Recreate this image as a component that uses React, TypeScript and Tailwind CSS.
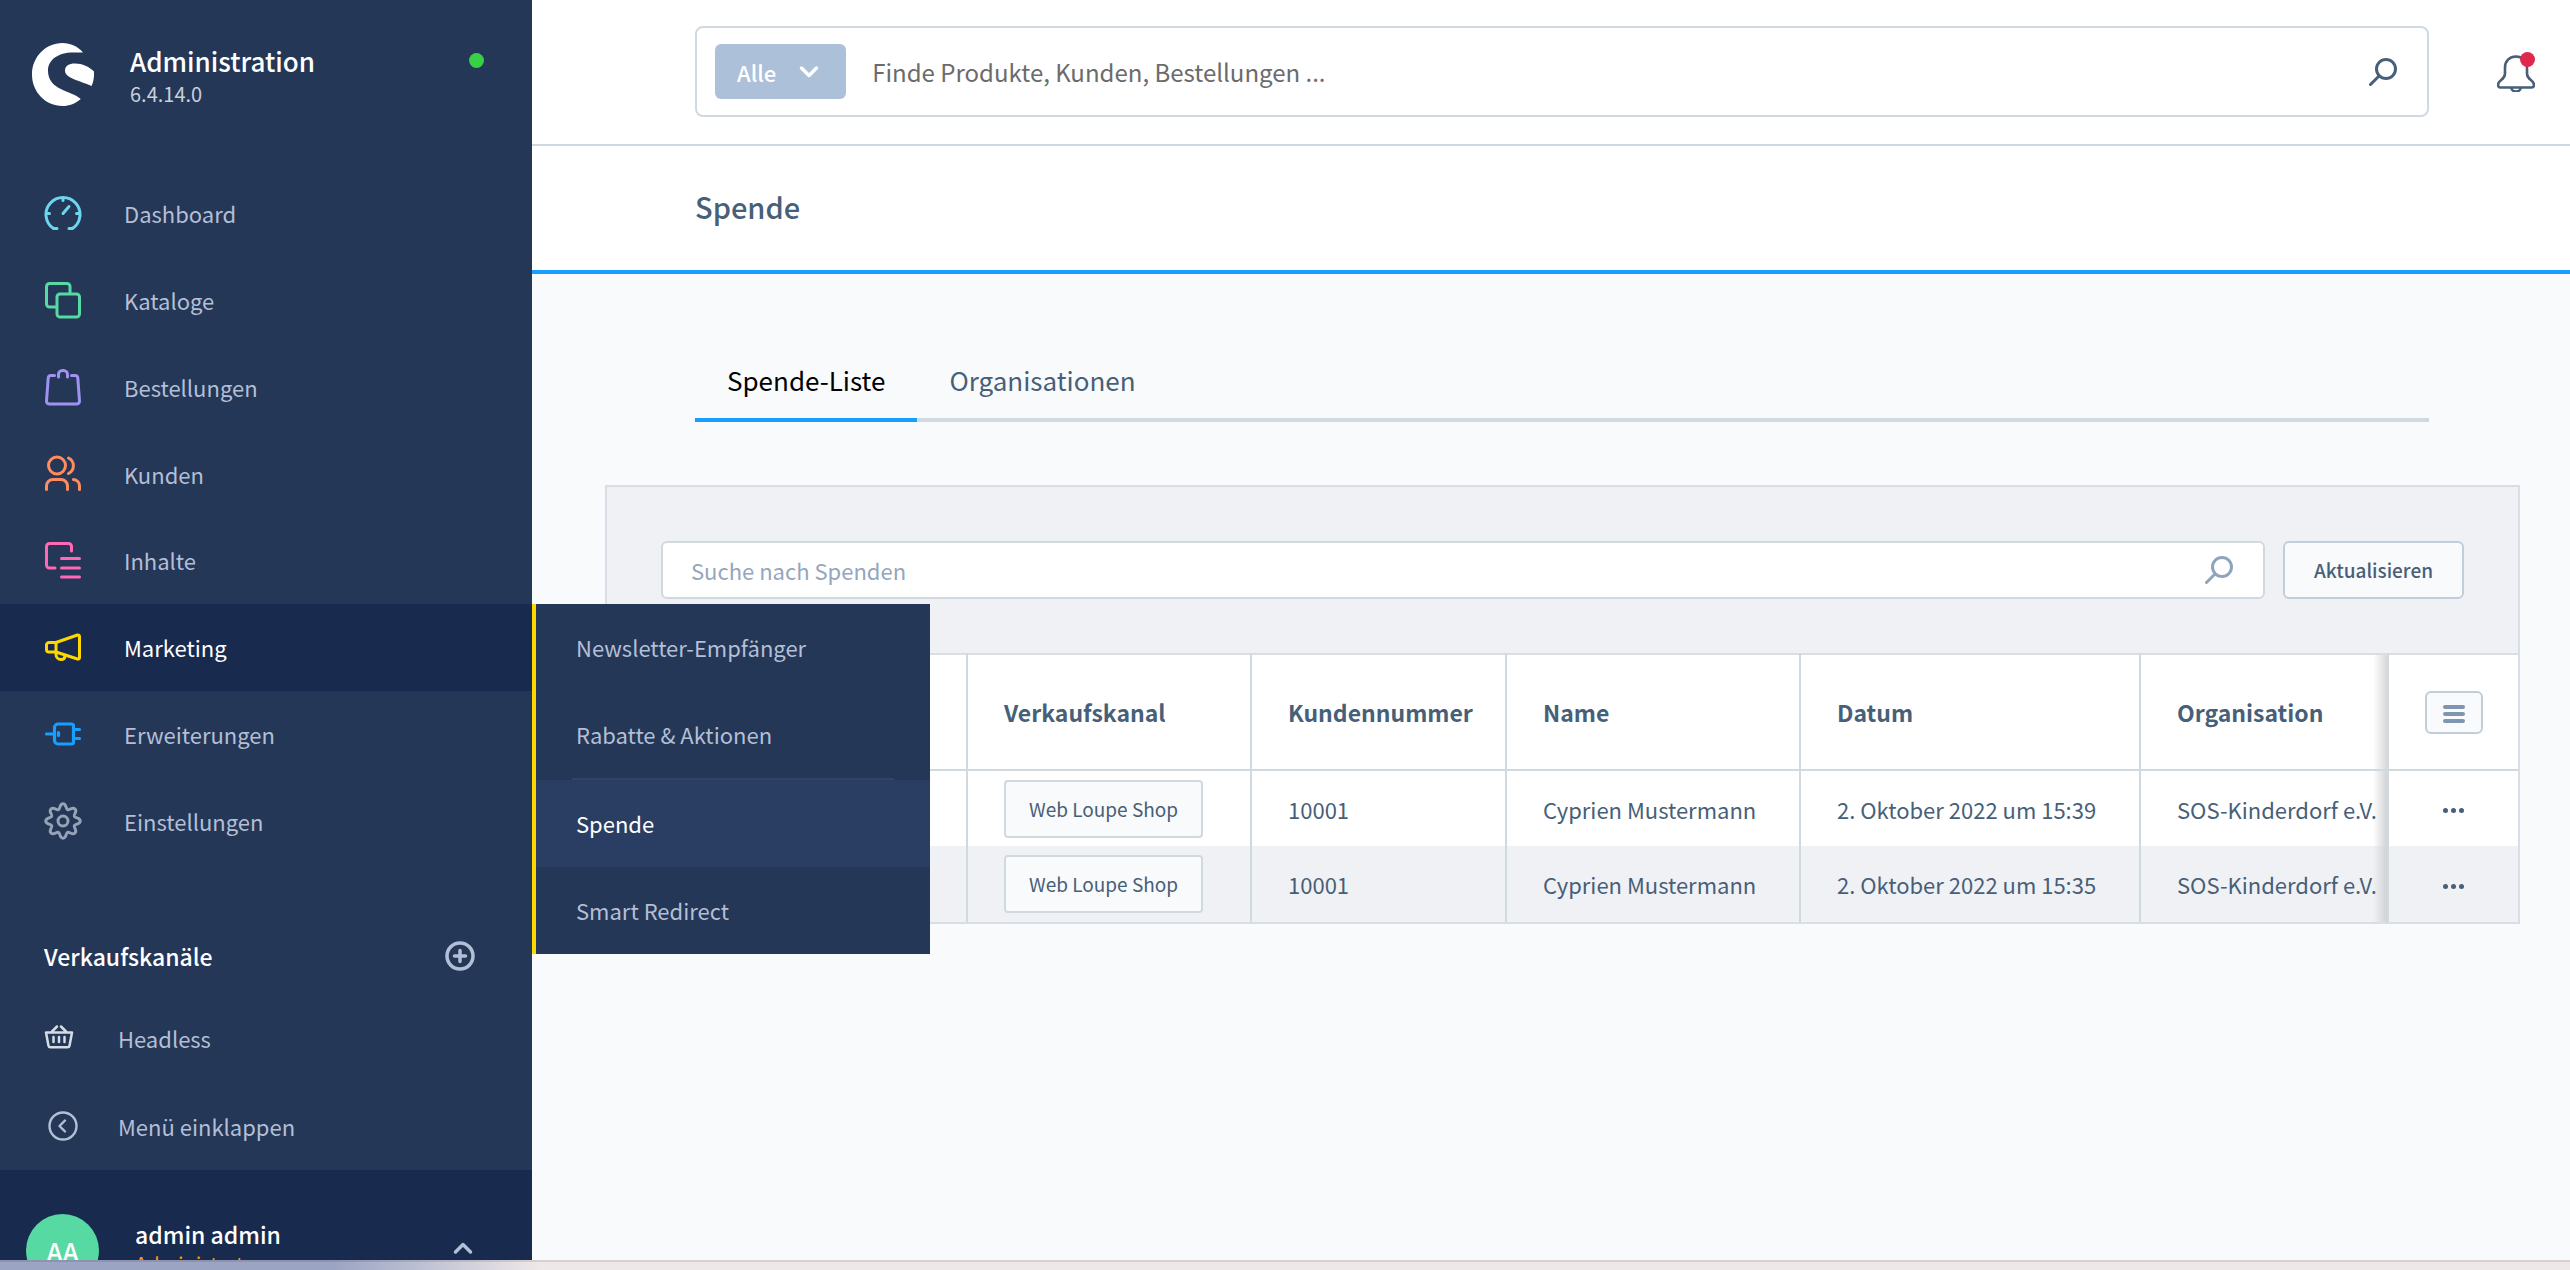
import React from "react";

type IconProps = { className?: string };

const Svg = ({ size, className = "", w = 3, children }: { size: number; className?: string; w?: number; children: React.ReactNode }) => (
  <svg
    width={size}
    height={size}
    viewBox={`0 0 ${size} ${size}`}
    fill="none"
    stroke="currentColor"
    strokeWidth={w}
    strokeLinecap="round"
    strokeLinejoin="round"
    aria-hidden="true"
    className={`shrink-0 ${className}`}
  >
    {children}
  </svg>
);

const DashboardIcon = () => (
  <Svg size={38} className="text-[#6ed5f0]">
    <path d="M13 34.500H9.500A17 17 0 1 1 28.500 34.500H25" />
    <path d="M19 4v2.500M3 19.500h2.500M32.500 19.500H35M19 19.500l6-7" />
  </Svg>
);

const CatalogIcon = () => (
  <Svg size={38} className="text-[#57d9a3]">
    <path d="M12 26H5.500a3 3 0 0 1-3-3V5.500a3 3 0 0 1 3-3H23a3 3 0 0 1 3 3V12" />
    <rect x="13" y="13" width="22.500" height="23" rx="3" />
  </Svg>
);

const OrdersIcon = () => (
  <Svg size={38} className="text-[#a092f0]">
    <path d="M10.500 7.500H7a2.800 2.800 0 0 0-2.800 2.600L2.500 33a2.800 2.800 0 0 0 2.800 3h27.400a2.800 2.800 0 0 0 2.800-3L33.800 10.100A2.800 2.800 0 0 0 31 7.500h-3.500" />
    <path d="M14.500 9V6.500a4 4 0 0 1 4-4h1a4 4 0 0 1 4 4V9" />
  </Svg>
);

const CustomersIcon = () => (
  <Svg size={38} className="text-[#ff8b60]">
    <circle cx="13" cy="10.500" r="8.500" />
    <path d="M24.500 3a8.600 8.600 0 0 1 0 15.500" />
    <path d="M2.500 34.500V31a6.500 6.500 0 0 1 6.500-6.500h8a6.500 6.500 0 0 1 6.500 6.500v3.500" />
    <path d="M29.500 24.500a6.500 6.500 0 0 1 6 6.500v3.500" />
  </Svg>
);

const ContentIcon = () => (
  <Svg size={38} className="text-[#ff68b4]">
    <path d="M11 27H5.500a3 3 0 0 1-3-3V5.500a3 3 0 0 1 3-3h19a3 3 0 0 1 3 3V10" />
    <path d="M17.500 17.500h18M17.500 27h18M17.500 36h18" />
  </Svg>
);

const MarketingIcon = () => (
  <Svg size={38} className="text-[#ffd700]">
    <path d="M12 14.500L33.500 7a1.500 1.500 0 0 1 2 1.500v21a1.500 1.500 0 0 1-2 1.500L12 24H4.500a2.500 2.500 0 0 1-2-2.500V17a2.500 2.500 0 0 1 2.500-2.500z" />
    <path d="M12 14.500V26.500a5 5 0 0 0 5 5c2.500 0 4-1.500 4-4" />
  </Svg>
);

const ExtensionsIcon = () => (
  <Svg size={38} w={3.200} className="text-[#189eff]">
    <path d="M14 9h13.500a2 2 0 0 1 2 2v16a2 2 0 0 1-2 2H14a3.500 3.500 0 0 1-3.500-3.500v-13A3.500 3.500 0 0 1 14 9z" />
    <path d="M2.500 19h8M14.500 17.500v3M29.500 14.500h6M29.500 23.500h6" />
  </Svg>
);

const SettingsIcon = () => (
  <Svg size={38} className="text-[#94a3b5]">
    <circle cx="19" cy="19" r="5" />
    <path d="M19.000 1.800 C22.500 1.800 21.600 6.600 23.600 7.700 C25.600 8.600 28.300 4.300 31.000 7.000 C33.700 9.700 29.400 12.400 30.300 14.400 C31.400 16.400 36.200 15.500 36.200 19.000 C36.200 22.500 31.400 21.600 30.300 23.600 C29.400 25.600 33.700 28.300 31.000 31.000 C28.300 33.700 25.600 29.400 23.600 30.300 C21.600 31.400 22.500 36.200 19.000 36.200 C15.500 36.200 16.400 31.400 14.400 30.300 C12.400 29.400 9.700 33.700 7.000 31.000 C4.300 28.300 8.600 25.600 7.700 23.600 C6.600 21.600 1.800 22.500 1.800 19.000 C1.800 15.500 6.600 16.400 7.700 14.400 C8.600 12.400 4.300 9.700 7.000 7.000 C9.700 4.300 12.400 8.600 14.400 7.700 C16.400 6.600 15.500 1.800 19.000 1.800 Z" />
  </Svg>
);

const BasketIcon = () => (
  <Svg size={30} w={2.500} className="text-[#d5dce4]">
    <path d="M2 9.500h26l-2.500 13.200a2 2 0 0 1-2 1.600H6.500a2 2 0 0 1-2-1.600zM8 8.500l5-5M22 8.500l-5-5" />
    <path d="M9.500 14v5M15 14v5M20.500 14v5" />
  </Svg>
);

const CollapseIcon = () => (
  <Svg size={30} w={2.400}>
    <circle cx="15" cy="15" r="13.500" />
    <path d="M17 9.500L11.500 15l5.500 5.500" />
  </Svg>
);

const PlusIcon = () => (
  <Svg size={30} w={3.500}>
    <circle cx="15" cy="15" r="13" />
    <path d="M15 9.500v11M9.500 15h11" />
  </Svg>
);

const SearchIcon = ({ className = "" }: IconProps) => (
  <Svg size={28} className={className}>
    <circle cx="17" cy="11" r="9.500" />
    <path d="M10 18l-8.500 8.500" />
  </Svg>
);

const ChevronIcon = ({ className = "" }: IconProps) => (
  <Svg size={20} w={3.500} className={className}>
    <path d="M2.500 6l7.500 7.500L17.500 6" />
  </Svg>
);

const BellIcon = () => (
  <Svg size={38} w={2.600} className="text-[#475f78]">
    <path d="M19 2.500c6.500 0 11 4.500 11 11v6c0 7 7 6 7 11.500 0 1.500-1 2.500-2.500 2.500h-31C2 33.500 1 32.500 1 31c0-5.500 7-4.500 7-11.500v-6c0-6.500 4.500-11 11-11z" />
    <path d="M14.500 34a4.500 3.500 0 0 0 9 0" />
  </Svg>
);

const Logo = () => (
  <svg width="62" height="63" viewBox="0 0 62 63" fill="#fff" aria-hidden="true" className="shrink-0">
    <path d="M51 9.500C46 3.500 38.500 0 30.500 0 13.500 0 0 14 0 31.500S13.500 63 30.500 63c7 0 13-2.500 18.300-7-5-4.500-13-6.500-20-10C21 42 16 37 16 27.500 16 17 26 9.500 41 9.500z" />
    <path d="M62 28.500C57 23.500 50.500 20.500 43 20.500c-6 0-10 2.500-10 7 0 8 15 10 26.500 15.500C61.500 39.500 62.300 33 62 28.500z" />
  </svg>
);

const navItems = [
  { label: "Dashboard", icon: <DashboardIcon /> },
  { label: "Kataloge", icon: <CatalogIcon /> },
  { label: "Bestellungen", icon: <OrdersIcon /> },
  { label: "Kunden", icon: <CustomersIcon /> },
  { label: "Inhalte", icon: <ContentIcon /> },
  { label: "Marketing", icon: <MarketingIcon />, active: true },
  { label: "Erweiterungen", icon: <ExtensionsIcon /> },
  { label: "Einstellungen", icon: <SettingsIcon /> },
];

const subItems = [
  { label: "Newsletter-Empfänger" },
  { label: "Rabatte & Aktionen" },
  { label: "Spende", active: true },
  { label: "Smart Redirect" },
];

const rows = [
  { id: 1, channel: "Web Loupe Shop", number: "10001", name: "Cyprien Mustermann", date: "2. Oktober 2022 um 15:39", org: "SOS-Kinderdorf e.V." },
  { id: 2, channel: "Web Loupe Shop", number: "10001", name: "Cyprien Mustermann", date: "2. Oktober 2022 um 15:35", org: "SOS-Kinderdorf e.V." },
];

function Submenu() {
  return (
    <ul className="absolute left-full top-0 z-20 w-[398px] border-l-4 border-[#ffd700] bg-[#243756]">
      {subItems.map((item) => (
        <li key={item.label}>
          {item.active && <div className="ml-9 mr-9 h-0.5 bg-[#304463]" />}
          <a
            href="#"
            className={`flex h-[87px] items-center pl-10 ${item.active ? "bg-[#2a3d63] text-white" : "text-[#b3bfd6]"}`}
          >
            {item.label}
          </a>
        </li>
      ))}
    </ul>
  );
}

function Sidebar() {
  return (
    <aside className="flex w-[532px] shrink-0 flex-col bg-[#243756] text-[#b3bfd6]">
      <div className="flex h-[170px] shrink-0 items-start pl-8 pr-12 pt-[43px]">
        <Logo />
        <div className="ml-9 flex-1">
          <div className="text-[26px] font-medium leading-9 text-white">Administration</div>
          <div className="text-[20px] leading-[30px] text-[#c8d0da]">6.4.14.0</div>
        </div>
        <span className="mt-2.5 size-[15px] rounded-full bg-[#37d046]" />
      </div>
      <nav>
        <ul className="grid h-[694px] grid-rows-8">
          {navItems.map((item) => (
            <li key={item.label} className="relative">
              <a
                href="#"
                className={`flex h-full items-center gap-[42px] pl-11 ${item.active ? "bg-[#182a4d] text-white" : ""}`}
              >
                {item.icon}
                {item.label}
              </a>
              {item.active && <Submenu />}
            </li>
          ))}
        </ul>
      </nav>
      <div className="mt-[72px] flex h-10 items-center justify-between pl-11 pr-[57px]">
        <h2 className="text-[23px] font-medium text-white">Verkaufskanäle</h2>
        <button type="button" aria-label="Verkaufskanal hinzufügen">
          <PlusIcon />
        </button>
      </div>
      <a href="#" className="mt-[42px] flex h-10 items-center gap-11 pl-11">
        <BasketIcon />
        Headless
      </a>
      <button type="button" className="mt-12 flex h-10 items-center gap-10 pl-12">
        <CollapseIcon />
        Menü einklappen
      </button>
      <div className="mt-auto flex h-[90px] shrink-0 items-start bg-[#182a4d] pl-[26px] pr-[59px] pt-11">
        <div className="flex size-[73px] shrink-0 items-center justify-center rounded-full bg-[#57d9a3] text-[26px] font-medium text-white">AA</div>
        <div className="ml-9 flex-1">
          <div className="text-[23px] font-medium leading-10 text-white">admin admin</div>
          <div className="text-[20px] leading-5 text-[#ff9800]">Administrator</div>
        </div>
        <button type="button" aria-label="Benutzermenü" className="mt-6">
          <ChevronIcon className="rotate-180" />
        </button>
      </div>
    </aside>
  );
}

function TopBar() {
  return (
    <header className="flex h-[146px] items-start border-b-2 border-[#cfd8e1] bg-white pl-[163px] pr-[35px] pt-[26px]">
      <div className="flex h-[91px] flex-1 items-center rounded-lg border-2 border-[#d1d9e0] pl-[18px] pr-[30px]">
        <button type="button" className="flex h-[55px] items-center gap-[23px] rounded-md bg-[#adc0da] pl-[22px] pr-[27px] font-medium text-white">
          Alle
          <ChevronIcon />
        </button>
        <input
          type="text"
          aria-label="Suche"
          placeholder="Finde Produkte, Kunden, Bestellungen ..."
          className="ml-[26px] min-w-0 flex-1 text-[24px] outline-none placeholder:text-[#6b6b6b]"
        />
        <button type="button" aria-label="Suchen">
          <SearchIcon className="text-[#475f78]" />
        </button>
      </div>
      <button type="button" aria-label="Benachrichtigungen" className="relative ml-[68px] mt-7">
        <BellIcon />
        <span className="absolute -top-0.5 right-0 size-[15px] rounded-full bg-[#de294c]" />
      </button>
    </header>
  );
}

function DonationTable() {
  const line = "border-r-2 border-[#d1d9e0]";
  return (
    <div className="ml-[73px] mr-[50px] border-2 border-[#d8dee6] text-[#475f78]">
      <div className="flex gap-[18px] bg-[#f0f1f5] px-[54px] py-[54px]">
        <div className="flex h-[58px] flex-1 items-center rounded-md border-2 border-[#d1d9e0] bg-white pl-7 pr-[30px]">
          <input
            type="text"
            aria-label="Suche nach Spenden"
            placeholder="Suche nach Spenden"
            className="min-w-0 flex-1 outline-none placeholder:text-[#94a6bd]"
          />
          <SearchIcon className="text-[#8fa3bb]" />
        </div>
        <button type="button" className="h-[58px] w-[181px] rounded-md border-2 border-[#c2cdda] bg-[#f9fafc] text-[19px] font-medium">
          Aktualisieren
        </button>
      </div>
      <table className="w-full table-fixed border-collapse border-t-2 border-[#d8dee6]">
        <colgroup>
          <col className="w-[360px]" />
          <col className="w-[284px]" />
          <col className="w-[255px]" />
          <col className="w-[294px]" />
          <col className="w-[340px]" />
          <col />
          <col className="w-[130px]" />
        </colgroup>
        <thead>
          <tr className="h-[116px] border-b-2 border-[#d1d9e0] bg-white text-left text-[23px]">
            <td className={line} />
            {["Verkaufskanal", "Kundennummer", "Name", "Datum"].map((title) => (
              <th key={title} scope="col" className={`pl-9 font-bold ${line}`}>
                {title}
              </th>
            ))}
            <th scope="col" className={`bg-linear-to-l from-[#d9d9d9] to-transparent bg-[length:14px_100%] bg-right bg-no-repeat pl-9 font-bold ${line}`}>
              Organisation
            </th>
            <td>
              <button
                type="button"
                aria-label="Spalten anpassen"
                className="mx-auto flex h-[43px] w-[58px] flex-col items-center justify-center gap-[3px] rounded-md border-2 border-[#c2cdda] bg-[#f9fafc] pt-1"
              >
                <span className="h-1 w-[22px] rounded-full bg-[#8095ae]" />
                <span className="h-1 w-[22px] rounded-full bg-[#8095ae]" />
                <span className="h-1 w-[22px] rounded-full bg-[#8095ae]" />
              </button>
            </td>
          </tr>
        </thead>
        <tbody>
          {rows.map((row) => (
            <tr key={row.id} className="h-[76px] bg-white even:bg-[#f0f1f5]">
              <td className={line} />
              <td className={`pl-9 ${line}`}>
                <span className="inline-flex h-[58px] items-center rounded-sm border-2 border-[#d1d9e0] bg-[#f9fafc] px-[23px] align-middle text-[19px]">
                  {row.channel}
                </span>
              </td>
              <td className={`pl-9 ${line}`}>{row.number}</td>
              <td className={`pl-9 ${line}`}>{row.name}</td>
              <td className={`pl-9 ${line}`}>{row.date}</td>
              <td className={`whitespace-nowrap bg-linear-to-l from-[#d2d3d6] to-transparent bg-[length:14px_100%] bg-right bg-no-repeat pl-9 ${line}`}>{row.org}</td>
              <td>
                <button type="button" aria-label="Aktionen" className="mx-auto flex h-10 w-14 items-center justify-center gap-[3px] pt-1">
                  <span className="size-[5px] rounded-full bg-[#475f78]" />
                  <span className="size-[5px] rounded-full bg-[#475f78]" />
                  <span className="size-[5px] rounded-full bg-[#475f78]" />
                </button>
              </td>
            </tr>
          ))}
        </tbody>
      </table>
    </div>
  );
}

export default function App() {
  return (
    <div className="flex h-screen flex-col overflow-hidden bg-[#f9fafc] font-['Noto_Sans_CJK_SC',sans-serif] text-[22px] leading-8">
      <div className="flex min-h-0 flex-1 overflow-hidden">
        <Sidebar />
        <main className="min-w-0 flex-1">
          <TopBar />
          <div className="flex h-[128px] items-center border-b-4 border-[#189eff] bg-white pb-1 pl-[163px]">
            <h1 className="text-[29px] font-medium text-[#475f78]">Spende</h1>
          </div>
          <div className="ml-[163px] mr-[141px] mt-[68px] flex border-b-4 border-[#d1d9e0] text-[26px]" role="tablist">
            <button type="button" role="tab" aria-selected="true" className="-mb-1 h-20 border-b-4 border-[#189eff] px-8 text-black">
              Spende-Liste
            </button>
            <button type="button" role="tab" aria-selected="false" className="-mb-1 h-20 border-b-4 border-transparent px-8 text-[#475f78]">
              Organisationen
            </button>
          </div>
          <div className="mt-[63px]">
            <DonationTable />
          </div>
        </main>
      </div>
      <div className="h-2.5 shrink-0 border-t-2 border-black/10 bg-linear-to-r from-[#9ba4c3] from-[13%] to-[#efe8e8] to-[21%]" />
    </div>
  );
}
